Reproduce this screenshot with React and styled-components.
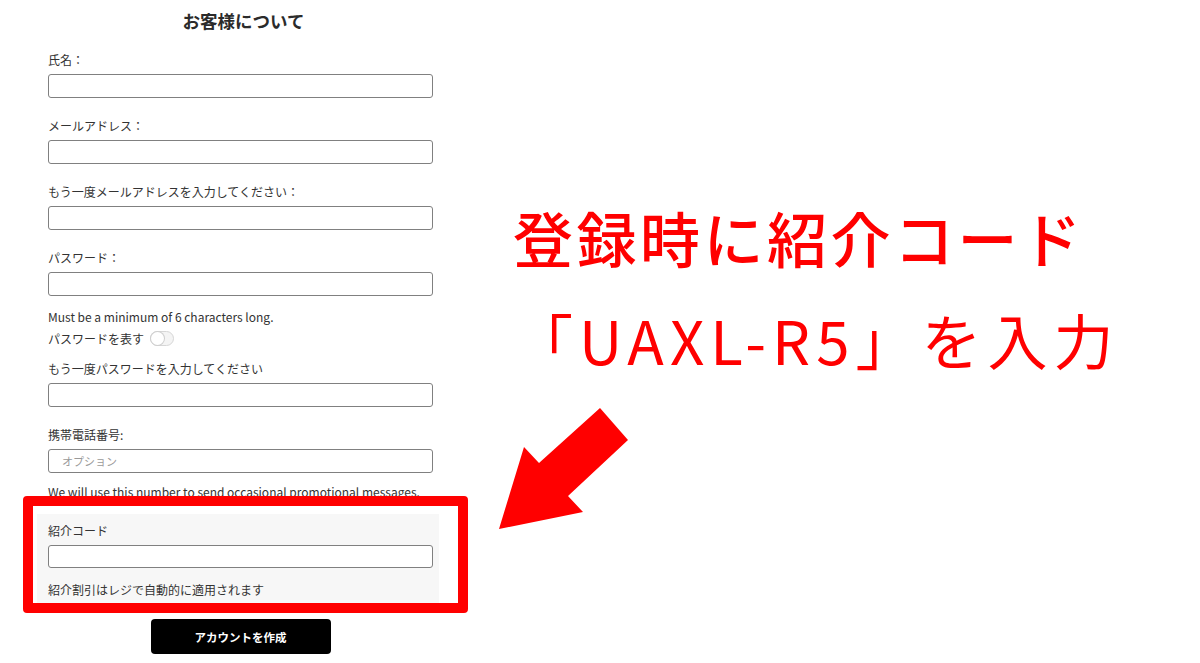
import React from "react";
import styled, { createGlobalStyle } from "styled-components";

const Global = createGlobalStyle`
  html, body { margin: 0; padding: 0; background: #fff; }
  body { font-family: "Noto Sans CJK JP", "Noto Sans", sans-serif; color: #333; }
  * { box-sizing: border-box; }
`;

const Page = styled.div`
  position: relative;
  width: 1200px;
  height: 663px;
  overflow: hidden;
  display: flex;
  align-items: flex-start;
`;

const FormColumn = styled.form`
  width: 385px;
  margin-left: 48px;
  display: flex;
  flex-direction: column;
`;

const Title = styled.h2`
  margin: 9px 0 0 6px;
  font-size: 17.5px;
  line-height: 24px;
  font-weight: 700;
  text-align: center;
  color: #2b2b2b;
`;

const Field = styled.div`
  display: flex;
  flex-direction: column;
  gap: 5px;
  margin-top: ${(p) => p.$top}px;
`;

const Label = styled.label`
  font-size: 12px;
  line-height: 18px;
  color: #333;
`;

const Input = styled.input`
  height: ${(p) => p.$h || 24}px;
  width: 100%;
  border: 1px solid #808080;
  border-radius: 3px;
  background: #fff;
  padding: 0 13px;
  font-family: inherit;
  font-size: 11px;
  &::placeholder { color: #9a9a9a; }
`;

const Note = styled.p`
  margin: ${(p) => p.$top}px 0 0;
  font-size: 12px;
  line-height: 18px;
  color: #333;
  white-space: nowrap;
`;

const ToggleRow = styled.div`
  display: flex;
  align-items: center;
  gap: 6px;
  height: 24px;
  font-size: 12px;
  color: #333;
`;

const Toggle = styled.span`
  position: relative;
  width: 24px;
  height: 15px;
  border: 1px solid #d6d6d6;
  border-radius: 8px;
  background: #f4f4f4;
  &::after {
    content: "";
    position: absolute;
    left: 0;
    top: 0;
    width: 13px;
    height: 13px;
    border-radius: 50%;
    background: #fff;
    box-shadow: 0 0 0 1px #cfcfcf;
  }
`;

const Referral = styled.section`
  position: relative;
  margin: 13px -6px 0 -11px;
  padding: 8px 6px 6px 11px;
  background: #f7f7f7;
  display: flex;
  flex-direction: column;
`;

const Highlight = styled.div`
  position: absolute;
  top: -18px;
  left: -14px;
  right: -29px;
  bottom: -8px;
  border: 10px solid #ff0000;
  border-radius: 4px;
  pointer-events: none;
`;

const SubmitButton = styled.button`
  align-self: center;
  margin-top: 14px;
  width: 180px;
  height: 35px;
  border: none;
  border-radius: 4px;
  background: #000;
  color: #fff;
  font-family: inherit;
  font-size: 11.5px;
  font-weight: 700;
`;

const Annotation = styled.div`
  margin-left: 80px;
  margin-top: 199px;
  display: flex;
  flex-direction: column;
  color: #ff0000;
`;

const BigLine = styled.div`
  font-size: 60px;
  line-height: 75px;
  letter-spacing: ${(p) => p.$spacing}px;
  font-weight: ${(p) => p.$weight};
  white-space: nowrap;
  margin-top: ${(p) => p.$top || 0}px;
`;

const ArrowSvg = styled.svg`
  position: absolute;
  left: 495px;
  top: 404px;
`;

const fields = [
  { label: "氏名：", top: 18 },
  { label: "メールアドレス：", top: 19 },
  { label: "もう一度メールアドレスを入力してください：", top: 19 },
  { label: "パスワード：", top: 19 },
];

export default function App() {
  return (
    <>
      <Global />
      <Page>
        <FormColumn onSubmit={(e) => e.preventDefault()}>
          <Title>お客様について</Title>
          {fields.map((f) => (
            <Field key={f.label} $top={f.top}>
              <Label>{f.label}</Label>
              <Input />
            </Field>
          ))}
          <Note $top={12}>Must be a minimum of 6 characters long.</Note>
          <ToggleRow>
            パスワードを表す
            <Toggle />
          </ToggleRow>
          <Field $top={10}>
            <Label>もう一度パスワードを入力してください</Label>
            <Input />
          </Field>
          <Field $top={19}>
            <Label>携帯電話番号:</Label>
            <Input placeholder="オプション" />
          </Field>
          <Note $top={10}>
            We will use this number to send occasional promotional messages.
          </Note>
          <Referral>
            <Field $top={0}>
              <Label>紹介コード</Label>
              <Input $h={23} />
            </Field>
            <Note $top={13}>紹介割引はレジで自動的に適用されます</Note>
            <Highlight />
          </Referral>
          <SubmitButton type="submit">アカウントを作成</SubmitButton>
        </FormColumn>
        <Annotation>
          <BigLine $weight={500} $spacing={3.5}>登録時に紹介コード</BigLine>
          <BigLine $weight={400} $spacing={6} $top={27}>「UAXL-R5」を入力</BigLine>
        </Annotation>
        <ArrowSvg width="140" height="130" viewBox="0 0 140 130">
          <polygon
            points="105,4 133,36 73,92 88,108 4,125 29,43 44,59"
            fill="#ff0000"
          />
        </ArrowSvg>
      </Page>
    </>
  );
}
